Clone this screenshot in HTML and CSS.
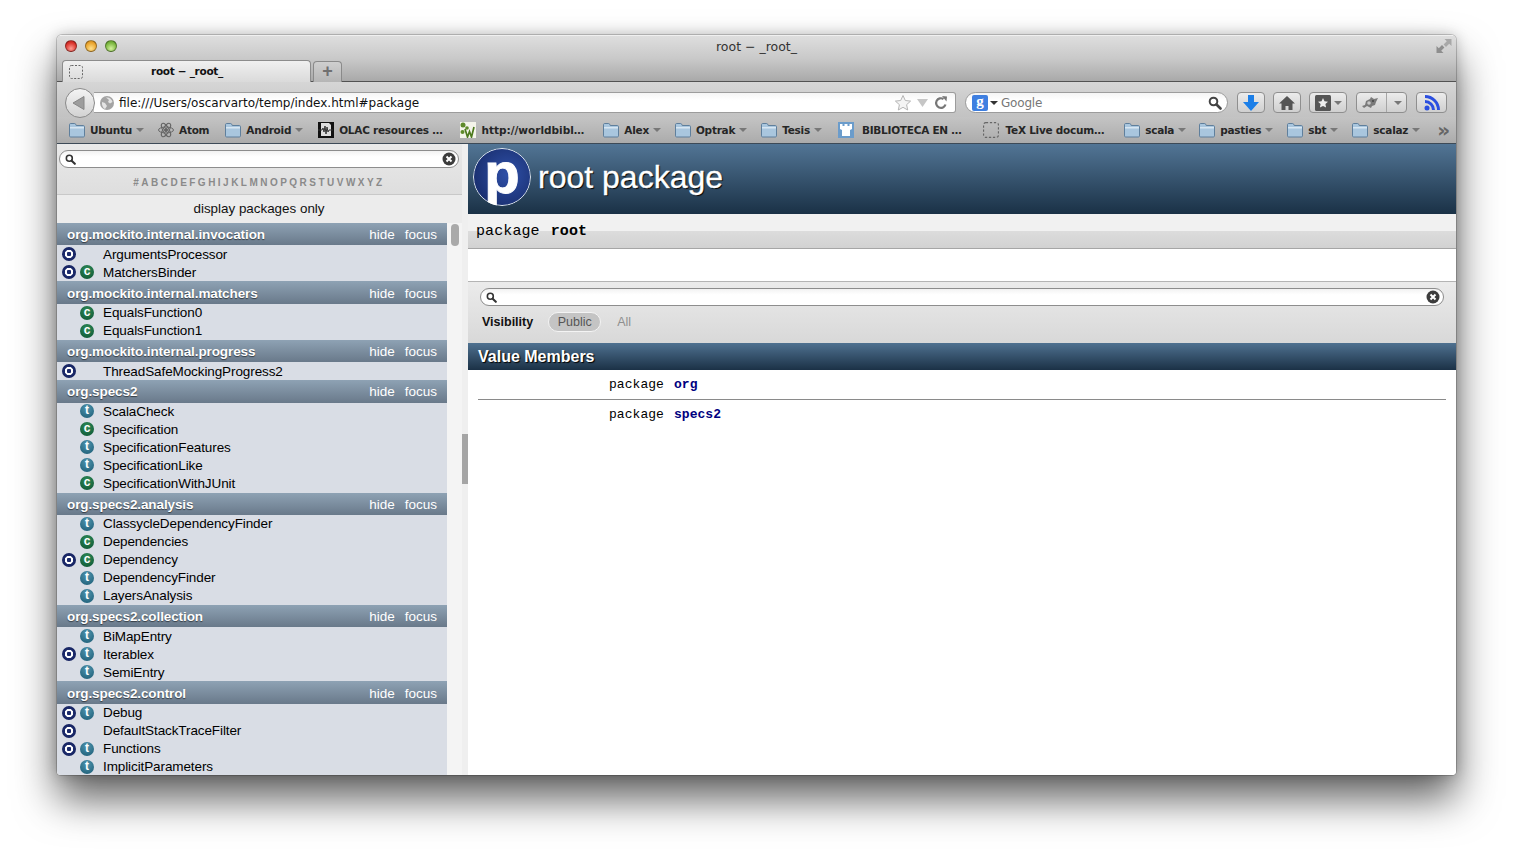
FILE: index.html
```html
<!DOCTYPE html>
<html lang="en">
<head>
	<meta charset="UTF-8">
	<title>root - _root_</title>
	<link rel="stylesheet" href="styles.css">
</head>
<body>
<svg class="defs" width="0" height="0">
	<symbol id="folder" viewBox="0 0 16 15">
		<path d="M.5 3V1.600C.5 1 1 .5 1.600.5h4c.5 0 .8.2 1 .6l.6 1.400h7.200c.6 0 1.100.5 1.100 1.100v9.300c0 .6-.5 1.100-1.100 1.100H1.600c-.6 0-1.100-.5-1.100-1.100z" fill="#a9c6de" stroke="#5f7f9c"/>
		<path d="M1 4h14v1.500H1z" fill="#d7e6f2"/>
	</symbol>
	<symbol id="dashed" viewBox="0 0 14 14">
		<rect x=".5" y=".5" width="13" height="13" rx="2" fill="none" stroke="#666" stroke-dasharray="2 1.500"/>
	</symbol>
	<symbol id="lens" viewBox="0 0 14 14">
		<circle cx="5.500" cy="5.500" r="3.800" fill="none" stroke="currentColor" stroke-width="2"/>
		<path d="M8.500 8.500l4 4" stroke="currentColor" stroke-width="2.600" stroke-linecap="round"/>
	</symbol>
	<symbol id="clear" viewBox="0 0 14 14">
		<circle cx="7" cy="7" r="6.500" fill="#3c3c3c"/>
		<path d="M4.500 4.500l5 5m0-5l-5 5" stroke="#fff" stroke-width="2"/>
	</symbol>
</svg>

<div class="window">
	<div class="titlebar">
		<div class="title-row">
			<div class="lights"><i class="light red"></i><i class="light amber"></i><i class="light green"></i></div>
			<div class="win-title">root − _root_</div>
			<svg class="resize" width="16" height="16" viewBox="0 0 16 16">
				<path d="M8.500 1H15.500V8L13.200 5.700 10 8.900 7.600 6.500 10.800 3.300z" fill="#a8a8a8"/>
				<path d="M7.500 15H.5V8L2.800 10.300 6 7.100 8.400 9.500 5.200 12.700z" fill="#8e8e8e"/>
			</svg>
		</div>
		<div class="tab-row">
			<div class="tab">
				<svg class="tab-icon" width="14" height="14"><use href="#dashed"/></svg>
				<span class="tab-label">root − _root_</span>
			</div>
			<div class="new-tab">+</div>
		</div>
	</div>

	<div class="toolbar">
		<div class="back">
			<svg width="16" height="16" viewBox="0 0 16 16"><path d="M13 1.500v13L2 8z" fill="#9d9d9d" stroke="#868686"/></svg>
		</div>
		<div class="urlbar">
			<svg class="globe" width="14" height="14" viewBox="0 0 14 14">
				<circle cx="7" cy="7" r="7" fill="#a4a4a4"/>
				<path d="M6 1.500C9 1 12 3 12.500 6L10 7.500 8 6 9 4zM2 6l3 1 2 3-2 3C3 12 1.500 9 2 6z" fill="#e4e4e4"/>
			</svg>
			<span class="url">file:///Users/oscarvarto/temp/index.html#package</span>
			<svg class="star" width="18" height="18" viewBox="0 0 18 18">
				<path d="M9 1.500l2.300 5 5.300.6-4 3.600 1.100 5.300L9 13.300 4.300 16l1.100-5.300-4-3.600 5.300-.6z" fill="#f4f4f4" stroke="#b5b5b5"/>
			</svg>
			<svg class="url-drop" width="11" height="8" viewBox="0 0 11 8"><path d="M0 0h11L5.500 8z" fill="#c6c6c6"/></svg>
			<svg class="reload" width="14" height="14" viewBox="0 0 14 14">
				<path d="M11.500 8.500A4.800 4.800 0 1 1 9.500 3" fill="none" stroke="#777" stroke-width="2.200"/>
				<path d="M8 0l5 .5-.5 5z" fill="#777"/>
			</svg>
		</div>
		<div class="searchbar">
			<span class="g-icon">g</span>
			<i class="caret dark"></i>
			<span class="search-text">Google</span>
			<svg class="search-lens" width="14" height="14"><use href="#lens"/></svg>
		</div>
		<div class="tbtn btn-down">
			<svg width="18" height="16" viewBox="0 0 18 16"><path d="M6 0h6v7h5l-8 9-8-9h5z" fill="#1c7fe8"/></svg>
		</div>
		<div class="tbtn btn-home">
			<svg width="18" height="16" viewBox="0 0 18 16"><path d="M9 1L1 8.500h2.500V15h4v-4h3v4h4V8.500H17z" fill="#555"/></svg>
		</div>
		<div class="tbtn btn-marks">
			<svg width="16" height="16" viewBox="0 0 16 16">
				<rect width="16" height="16" rx="1.500" fill="#555"/>
				<path d="M8 3l1.500 3.300 3.500.4-2.600 2.400.7 3.500L8 10.900l-3.100 1.700.7-3.500L3 6.700l3.500-.4z" fill="#eee"/>
			</svg>
			<i class="caret"></i>
		</div>
		<div class="tbtn btn-addon">
			<svg width="18" height="14" viewBox="0 0 18 14">
				<path d="M1 10l3-1 1-4 4-2 1-2 3 2 4-1-2 4-1 3-3 1-1 2-4-2-3 2z" fill="#7a7a7a"/>
				<circle cx="8" cy="7" r="1.800" fill="#c8c8c8"/>
				<circle cx="12" cy="5" r="1" fill="#444"/>
			</svg>
			<i class="sep"></i>
			<i class="caret"></i>
		</div>
		<div class="tbtn btn-rss">
			<svg width="16" height="16" viewBox="0 0 16 16">
				<circle cx="3" cy="13" r="2.500" fill="#2b4fe0"/>
				<path d="M1 6.500A8.500 8.500 0 0 1 9.500 15M1 1.500A13.500 13.500 0 0 1 14.500 15" fill="none" stroke="#2b4fe0" stroke-width="3"/>
			</svg>
		</div>
	</div>

	<div class="bookmarks">
		<div class="bm gap-14"><svg class="folder"><use href="#folder"/></svg><span>Ubuntu</span><i class="caret"></i></div>
		<div class="bm gap-16">
			<svg class="bm-icon" viewBox="0 0 16 16" fill="none" stroke="#666">
				<ellipse cx="8" cy="8" rx="7.500" ry="3"/>
				<ellipse cx="8" cy="8" rx="7.500" ry="3" transform="rotate(60 8 8)"/>
				<ellipse cx="8" cy="8" rx="7.500" ry="3" transform="rotate(120 8 8)"/>
				<circle cx="8" cy="8" r="1.500" fill="#666"/>
			</svg>
			<span>Atom</span>
		</div>
		<div class="bm gap-15"><svg class="folder"><use href="#folder"/></svg><span>Android</span><i class="caret"></i></div>
		<div class="bm gap-18">
			<svg class="bm-icon" viewBox="0 0 16 16">
				<rect width="16" height="16" fill="#111"/>
				<path d="M3 1h8l2 2v11H3z" fill="#ddd"/>
				<path d="M0 8h4l1-2 1 4 1-6 1 8 1-7 1 5 1-2h4" fill="none" stroke="#333"/>
			</svg>
			<span>OLAC resources …</span>
		</div>
		<div class="bm gap-19 wide">
			<svg class="bm-icon" viewBox="0 0 16 16">
				<rect width="16" height="16" fill="#f4f4ea"/>
				<circle cx="3" cy="3" r="2.500" fill="#5f8a2a"/>
				<circle cx="2.500" cy="10" r="2" fill="#5f8a2a"/>
				<circle cx="7" cy="6" r="1.800" fill="#5f8a2a"/>
				<path d="M5 7l2.500 8 2-5.500 2 5.500L14 5" fill="none" stroke="#4d7a1e" stroke-width="1.700"/>
			</svg>
			<span>http://worldbibl…</span>
		</div>
		<div class="bm gap-14"><svg class="folder"><use href="#folder"/></svg><span>Alex</span><i class="caret"></i></div>
		<div class="bm gap-14"><svg class="folder"><use href="#folder"/></svg><span>Optrak</span><i class="caret"></i></div>
		<div class="bm gap-16"><svg class="folder"><use href="#folder"/></svg><span>Tesis</span><i class="caret"></i></div>
		<div class="bm gap-21">
			<svg class="bm-icon bib" viewBox="0 0 16 16">
				<rect width="16" height="16" fill="#6b9ccb"/>
				<path d="M2 2h2.500v2h2V2h3v2h2V2H14v5l-2 1v6H4V8L2 7z" fill="#fff"/>
			</svg>
			<span>BIBLIOTECA EN …</span>
		</div>
		<div class="bm gap-20"><svg class="bm-icon tex"><use href="#dashed"/></svg><span>TeX Live docum…</span></div>
		<div class="bm gap-13"><svg class="folder"><use href="#folder"/></svg><span>scala</span><i class="caret"></i></div>
		<div class="bm gap-14"><svg class="folder"><use href="#folder"/></svg><span>pasties</span><i class="caret"></i></div>
		<div class="bm gap-14"><svg class="folder"><use href="#folder"/></svg><span>sbt</span><i class="caret"></i></div>
		<div class="bm"><svg class="folder"><use href="#folder"/></svg><span>scalaz</span><i class="caret"></i></div>
		<div class="more">»</div>
	</div>

	<div class="page">
		<div class="browser">
			<div class="side-top">
				<div class="filter side-filter">
					<svg width="11" height="11"><use href="#lens"/></svg>
					<svg width="14" height="14"><use href="#clear"/></svg>
				</div>
				<div class="letters">#ABCDEFGHIJKLMNOPQRSTUVWXYZ</div>
			</div>
			<div class="pkg-only">display packages only</div>
			<div class="tpl-wrap">
				<div class="tpl-list">
					<div class="pack"><span class="pack-name">org.mockito.internal.invocation</span><span class="pack-links"><span>hide</span><span>focus</span></span></div>
					<div class="entry"><i class="ic ic-o"></i><i class="ic-none"></i><span>ArgumentsProcessor</span></div>
					<div class="entry"><i class="ic ic-o"></i><i class="ic ic-c">c</i><span>MatchersBinder</span></div>

					<div class="pack"><span class="pack-name">org.mockito.internal.matchers</span><span class="pack-links"><span>hide</span><span>focus</span></span></div>
					<div class="entry"><i class="ic-none"></i><i class="ic ic-c">c</i><span>EqualsFunction0</span></div>
					<div class="entry"><i class="ic-none"></i><i class="ic ic-c">c</i><span>EqualsFunction1</span></div>

					<div class="pack"><span class="pack-name">org.mockito.internal.progress</span><span class="pack-links"><span>hide</span><span>focus</span></span></div>
					<div class="entry"><i class="ic ic-o"></i><i class="ic-none"></i><span>ThreadSafeMockingProgress2</span></div>

					<div class="pack"><span class="pack-name">org.specs2</span><span class="pack-links"><span>hide</span><span>focus</span></span></div>
					<div class="entry"><i class="ic-none"></i><i class="ic ic-t">t</i><span>ScalaCheck</span></div>
					<div class="entry"><i class="ic-none"></i><i class="ic ic-c">c</i><span>Specification</span></div>
					<div class="entry"><i class="ic-none"></i><i class="ic ic-t">t</i><span>SpecificationFeatures</span></div>
					<div class="entry"><i class="ic-none"></i><i class="ic ic-t">t</i><span>SpecificationLike</span></div>
					<div class="entry"><i class="ic-none"></i><i class="ic ic-c">c</i><span>SpecificationWithJUnit</span></div>

					<div class="pack"><span class="pack-name">org.specs2.analysis</span><span class="pack-links"><span>hide</span><span>focus</span></span></div>
					<div class="entry"><i class="ic-none"></i><i class="ic ic-t">t</i><span>ClassycleDependencyFinder</span></div>
					<div class="entry"><i class="ic-none"></i><i class="ic ic-c">c</i><span>Dependencies</span></div>
					<div class="entry"><i class="ic ic-o"></i><i class="ic ic-c">c</i><span>Dependency</span></div>
					<div class="entry"><i class="ic-none"></i><i class="ic ic-t">t</i><span>DependencyFinder</span></div>
					<div class="entry"><i class="ic-none"></i><i class="ic ic-t">t</i><span>LayersAnalysis</span></div>

					<div class="pack"><span class="pack-name">org.specs2.collection</span><span class="pack-links"><span>hide</span><span>focus</span></span></div>
					<div class="entry"><i class="ic-none"></i><i class="ic ic-t">t</i><span>BiMapEntry</span></div>
					<div class="entry"><i class="ic ic-o"></i><i class="ic ic-t">t</i><span>Iterablex</span></div>
					<div class="entry"><i class="ic-none"></i><i class="ic ic-t">t</i><span>SemiEntry</span></div>

					<div class="pack"><span class="pack-name">org.specs2.control</span><span class="pack-links"><span>hide</span><span>focus</span></span></div>
					<div class="entry"><i class="ic ic-o"></i><i class="ic ic-t">t</i><span>Debug</span></div>
					<div class="entry"><i class="ic ic-o"></i><i class="ic-none"></i><span>DefaultStackTraceFilter</span></div>
					<div class="entry"><i class="ic ic-o"></i><i class="ic ic-t">t</i><span>Functions</span></div>
					<div class="entry"><i class="ic-none"></i><i class="ic ic-t">t</i><span>ImplicitParameters</span></div>
				</div>
				<div class="scroll"><i class="thumb"></i></div>
			</div>
		</div>

		<div class="splitter"><i class="grip"></i></div>

		<div class="content">
			<div class="definition">
				<div class="big-circle">p</div>
				<h1>root package</h1>
			</div>
			<div class="signature"><span class="kind">package</span><b>root</b></div>
			<div class="comment"></div>
			<div class="mbrsel">
				<div class="filter">
					<svg width="11" height="11"><use href="#lens"/></svg>
					<svg width="14" height="14"><use href="#clear"/></svg>
				</div>
				<div class="visbl">
					<span class="vis-label">Visibility</span>
					<span class="vis-pill">Public</span>
					<span class="vis-all">All</span>
				</div>
			</div>
			<h3 class="members-head">Value Members</h3>
			<ol class="members">
				<li><span class="kind">package</span><a href="#org">org</a></li>
				<li><span class="kind">package</span><a href="#specs2">specs2</a></li>
			</ol>
		</div>
	</div>
</div>
</body>
</html>
```

FILE: styles.css
```css
html, body {
	margin: 0;
	height: 854px;
	overflow: hidden;
	background: #fff;
}
body {
	padding: 35px 57px 0 57px;
	box-sizing: border-box;
	font-family: "Liberation Sans", Arial, sans-serif;
	color: #000;
}
.defs {
	position: absolute;
}
i {
	font-style: normal;
}

.window {
	width: 1399px;
	height: 740px;
	display: flex;
	flex-direction: column;
	border-radius: 5px 5px 4px 4px;
	box-shadow: 0 0 0 1px rgba(0,0,0,.18), 0 24px 42px rgba(0,0,0,.62), 0 0 14px rgba(0,0,0,.22);
	overflow: hidden;
	background: #fff;
}

/* title bar and tabs */
.titlebar {
	height: 47px;
	flex: none;
	box-sizing: border-box;
	border-top: 1px solid #f0f0f0;
	border-bottom: 1px solid #525252;
	background: linear-gradient(#dedede, #c9c9c9 50%, #a9a9a9);
	display: flex;
	flex-direction: column;
}
.title-row {
	height: 24px;
	flex: none;
	box-sizing: border-box;
	display: grid;
	grid-template-columns: 1fr auto 1fr;
	align-items: center;
	padding: 0 8px 4px 8px;
}
.lights {
	display: flex;
	gap: 8px;
}
.light {
	width: 12px;
	height: 12px;
	border-radius: 50%;
	box-sizing: border-box;
	border: 1px solid rgba(0,0,0,.35);
}
.red { background: radial-gradient(circle at 50% 75%, #ff9c93, #d9322b 65%, #a81f1c); }
.amber { background: radial-gradient(circle at 50% 75%, #ffe08a, #e9a32c 65%, #b87a1a); }
.green { background: radial-gradient(circle at 50% 75%, #d3f29d, #7ab63e 65%, #558a28); }
.win-title {
	font: 12.500px "DejaVu Sans", sans-serif;
	color: #333;
}
.resize {
	justify-self: end;
	margin-right: -4px;
}
.tab-row {
	flex: 1;
	display: flex;
	align-items: flex-end;
	padding-left: 5px;
	gap: 2px;
	margin-bottom: -1px;
}
.tab {
	width: 249px;
	height: 23px;
	flex: none;
	box-sizing: border-box;
	border: 1px solid #8c8c8c;
	border-bottom: none;
	border-radius: 4px 4px 0 0;
	background: linear-gradient(#f0f0f0, #d9d9d9);
	display: flex;
	align-items: center;
	padding-left: 6px;
	position: relative;
}
.tab-label {
	margin: 0 0 2px 68px;
	font: bold 10.500px "DejaVu Sans", sans-serif;
	letter-spacing: -.3px;
	color: #111;
}
.new-tab {
	width: 29px;
	height: 22px;
	box-sizing: border-box;
	border: 1px solid #8a8a8a;
	border-bottom: none;
	border-radius: 4px 4px 0 0;
	background: linear-gradient(#cfcfcf, #b4b4b4);
	text-align: center;
	font: bold 18px/19px "Liberation Sans", sans-serif;
	color: #707070;
}

/* url toolbar */
.toolbar {
	height: 35px;
	flex: none;
	box-sizing: border-box;
	background: linear-gradient(#d6d6d6, #c2c2c2);
	display: flex;
	align-items: center;
	padding: 6px 9px 0 8px;
	position: relative;
	z-index: 2;
}
.back {
	width: 30px;
	height: 30px;
	box-sizing: border-box;
	border: 1px solid #8a8a8a;
	border-radius: 50%;
	background: linear-gradient(#f4f4f4, #d2d2d2);
	display: flex;
	align-items: center;
	justify-content: center;
	flex: none;
	z-index: 1;
}
.back svg {
	margin-left: -3px;
}
.urlbar {
	width: 862px;
	height: 21px;
	flex: none;
	margin-left: -1px;
	box-sizing: border-box;
	border: 1px solid #9c9c9c;
	border-left: none;
	border-radius: 0 3px 3px 0;
	background: linear-gradient(#f4f4f4, #fff 40%);
	display: flex;
	align-items: center;
	padding: 0 7px 0 6px;
}
.globe {
	margin-right: 5px;
}
.url {
	flex: 1;
	font: 12px "DejaVu Sans", sans-serif;
	color: #111;
}
.star {
	margin-right: 5px;
}
.url-drop {
	margin-right: 6px;
}
.searchbar {
	width: 263px;
	height: 21px;
	flex: none;
	margin-left: 9px;
	box-sizing: border-box;
	border: 1px solid #9c9c9c;
	border-radius: 11px;
	background: linear-gradient(#f4f4f4, #fff 40%);
	display: flex;
	align-items: center;
	padding: 0 5px 0 6px;
}
.g-icon {
	width: 16px;
	height: 16px;
	background: #3f7fe0;
	border-radius: 2px;
	color: #fff;
	text-align: center;
	font: bold 15px/13px "Liberation Serif", serif;
}
.searchbar .caret {
	margin-left: 2px;
}
.search-text {
	flex: 1;
	margin-left: 3px;
	font: 12px "DejaVu Sans", sans-serif;
	letter-spacing: -.2px;
	color: #777;
}
.search-lens {
	color: #444;
}
.caret {
	display: inline-block;
	width: 0;
	height: 0;
	flex: none;
	border-left: 4px solid transparent;
	border-right: 4px solid transparent;
	border-top: 4px solid #777;
}
.caret.dark {
	border-top-color: #333;
}
.tbtn {
	height: 21px;
	flex: none;
	box-sizing: border-box;
	border: 1px solid #8f8f8f;
	border-radius: 4px;
	background: linear-gradient(#ececec, #cfcfcf);
	display: flex;
	align-items: center;
	justify-content: center;
	gap: 3px;
}
.btn-down { width: 28px; margin-left: 9px; }
.btn-home { width: 28px; margin-left: 8px; }
.btn-marks { width: 38px; margin-left: 8px; }
.btn-addon { width: 51px; margin-left: 9px; gap: 7px; }
.btn-rss { width: 31px; margin-left: 9px; }
.sep {
	width: 1px;
	height: 19px;
	background: #a5a5a5;
}

/* bookmarks bar */
.bookmarks {
	height: 27px;
	flex: none;
	box-sizing: border-box;
	background: linear-gradient(#c4c4c4, #ababab);
	border-bottom: 1px solid #3d4a57;
	display: flex;
	align-items: center;
	padding-left: 12px;
	font: bold 10.500px "DejaVu Sans", sans-serif;
	letter-spacing: -.25px;
	color: #262626;
	white-space: nowrap;
}
.bm {
	display: flex;
	align-items: center;
	flex: none;
}
.bm.wide {
	letter-spacing: 0;
}
.folder {
	width: 16px;
	height: 15px;
	margin-right: 5px;
}
.bm-icon {
	width: 16px;
	height: 16px;
	margin-right: 5px;
}
.bm-icon.bib {
	margin-right: 8px;
}
.bm-icon.tex {
	margin-right: 7px;
}
.bm .caret {
	margin-left: 4px;
}
.gap-13 { margin-right: 13px; }
.gap-14 { margin-right: 14px; }
.gap-15 { margin-right: 15px; }
.gap-16 { margin-right: 16px; }
.gap-18 { margin-right: 18px; }
.gap-19 { margin-right: 19px; }
.gap-20 { margin-right: 20px; }
.gap-21 { margin-right: 21px; }
.more {
	margin-left: auto;
	margin-right: 6px;
	font: bold 20px/20px "DejaVu Sans", sans-serif;
	color: #666;
}

/* page: left browser */
.page {
	flex: 1;
	min-height: 0;
	display: flex;
}
.browser {
	width: 405px;
	flex: none;
	display: flex;
	flex-direction: column;
	background: #ececec;
}
.side-top {
	height: 51px;
	flex: none;
	box-sizing: border-box;
	background: linear-gradient(#e9e9e9, #dedede);
	border-bottom: 1px solid #c8c8c8;
	padding-top: 6px;
}
.filter {
	height: 18px;
	box-sizing: border-box;
	border: 1px solid #8d8d8d;
	border-radius: 9px;
	background: linear-gradient(#f2f2f2, #fff 35%);
	display: flex;
	align-items: center;
	justify-content: space-between;
	padding: 0 3px 0 5px;
	color: #333;
}
.side-filter {
	margin: 0 3px 0 2px;
	padding-right: 2px;
}
.letters {
	margin-top: 9px;
	text-align: center;
	padding-right: 1px;
	font: bold 10px "Liberation Sans", sans-serif;
	letter-spacing: 2.480px;
	color: #8a8a8a;
}
.pkg-only {
	height: 28px;
	flex: none;
	text-align: center;
	font-size: 13.400px;
	line-height: 28px;
	color: #111;
	padding-right: 1px;
}
.tpl-wrap {
	flex: 1;
	min-height: 0;
	display: flex;
	overflow: hidden;
}
.tpl-list {
	width: 390px;
	flex: none;
	background: #d9dde5;
	overflow: hidden;
}
.pack {
	height: 22.400px;
	box-sizing: border-box;
	background: linear-gradient(#8ea2b4, #69798a);
	color: #fff;
	display: flex;
	align-items: center;
	justify-content: space-between;
	padding: 1.200px 10px 0;
	font-size: 13.500px;
}
.pack-name {
	font-weight: bold;
	letter-spacing: -.1px;
	text-shadow: 0 1px 1px rgba(0,0,0,.55);
}
.pack-links {
	display: flex;
	gap: 10px;
}
.entry {
	height: 18px;
	box-sizing: border-box;
	display: flex;
	align-items: center;
	padding: 0 0 .25px 5px;
	font-size: 13.500px;
	letter-spacing: -.1px;
	color: #000;
}
.ic, .ic-none {
	width: 14px;
	height: 14px;
	flex: none;
	margin-right: 4px;
}
.ic + span, .ic-none + span {
	margin-left: 5px;
}
.ic {
	border-radius: 50%;
	color: #fff;
	text-align: center;
	font: bold 12px/12px "Liberation Sans", sans-serif;
	letter-spacing: 0;
}
.ic-o {
	background: radial-gradient(circle, #1b2a6b 0 2px, #fff 2.500px 3.800px, #1b2a6b 4.500px, #111c55);
}
.ic-c {
	background: radial-gradient(circle at 50% 30%, #2f8a58, #0b5230);
}
.ic-t {
	background: radial-gradient(circle at 50% 30%, #4f94ae, #1a5a73);
}
.scroll {
	flex: 1;
	background: #f4f4f4;
	padding: 1px 0 0 4px;
}
.thumb {
	display: block;
	width: 8px;
	height: 22px;
	border-radius: 4px;
	background: #a9a9a9;
}
.splitter {
	width: 6px;
	flex: none;
	background: #efefef;
	border-right: 1px solid #a8a8a8;
	box-sizing: content-box;
	display: flex;
	align-items: flex-start;
	margin-right: -1px;
}
.grip {
	display: block;
	width: 6px;
	height: 50px;
	margin-top: 290px;
	background: #a5a5a5;
}

/* page: right content */
.content {
	flex: 1;
	min-width: 0;
	background: #fff;
	display: flex;
	flex-direction: column;
}
.definition {
	height: 70px;
	flex: none;
	box-sizing: border-box;
	background: linear-gradient(#527595, #1a3146);
	display: flex;
	align-items: center;
	padding-left: 5px;
}
.big-circle {
	width: 58px;
	height: 58px;
	flex: none;
	box-sizing: border-box;
	margin-top: -4px;
	border: 1px solid #dfe6f0;
	border-radius: 50%;
	background: radial-gradient(circle at 60% 45%, #2f50a8, #13255f);
	clip-path: circle(50%);
	text-align: center;
	font: bold 58px/48px "Liberation Sans", sans-serif;
	-webkit-text-stroke: 1px #fff;
	color: #fff;
}
.definition h1 {
	margin: -4px 0 0 7px;
	font: 32px "Liberation Sans", sans-serif;
	-webkit-text-stroke: .3px #fff;
	color: #fff;
	text-shadow: 1px 1px 1px #000;
}
.signature {
	height: 35px;
	flex: none;
	box-sizing: border-box;
	background: linear-gradient(#f1f1f1 0 50%, #dcdcdc 50%, #d2d2d2);
	border-bottom: 1px solid #a6a6a6;
	padding: 0 0 0 8px;
	display: flex;
	align-items: center;
	font: 15px "Liberation Mono", monospace;
	letter-spacing: .1px;
}
.kind {
	margin-right: 11px;
}
.comment {
	height: 33px;
	flex: none;
	box-sizing: border-box;
	border-bottom: 1px solid #b4b4b4;
}
.mbrsel {
	height: 61px;
	flex: none;
	box-sizing: border-box;
	background: linear-gradient(#ebebeb, #d8d8d8);
	padding: 6px 12px 0 12px;
}
.visbl {
	margin-top: 6px;
	padding-left: 2px;
	display: flex;
	align-items: center;
	font-size: 12.500px;
}
.vis-label {
	font-weight: bold;
	color: #111;
}
.vis-pill {
	margin-left: 15px;
	width: 53px;
	height: 20px;
	box-sizing: border-box;
	border: 1px solid #f4f4f4;
	border-radius: 10px;
	background: #c4c4c4;
	text-align: center;
	line-height: 18px;
	color: #555;
}
.vis-all {
	margin-left: 16px;
	color: #8f8f8f;
}
.members-head {
	height: 27px;
	flex: none;
	margin: 0;
	box-sizing: border-box;
	background: linear-gradient(#4f7190, #1b3146);
	padding-left: 10px;
	font: bold 16px/27px "Liberation Sans", sans-serif;
	color: #fff;
	text-shadow: 1px 1px 1px #000;
}
.members {
	list-style: none;
	margin: 0;
	padding: 0 10px;
	font: 13px "Liberation Mono", monospace;
	letter-spacing: .05px;
}
.members li {
	height: 30px;
	box-sizing: border-box;
	padding: 7px 0 0 131px;
	line-height: 15px;
}
.members li:first-child {
	border-bottom: 1px solid #8a8a8a;
}
.members .kind {
	margin-right: 10px;
}
.members a {
	color: #000080;
	font-weight: bold;
	text-decoration: none;
}
```
